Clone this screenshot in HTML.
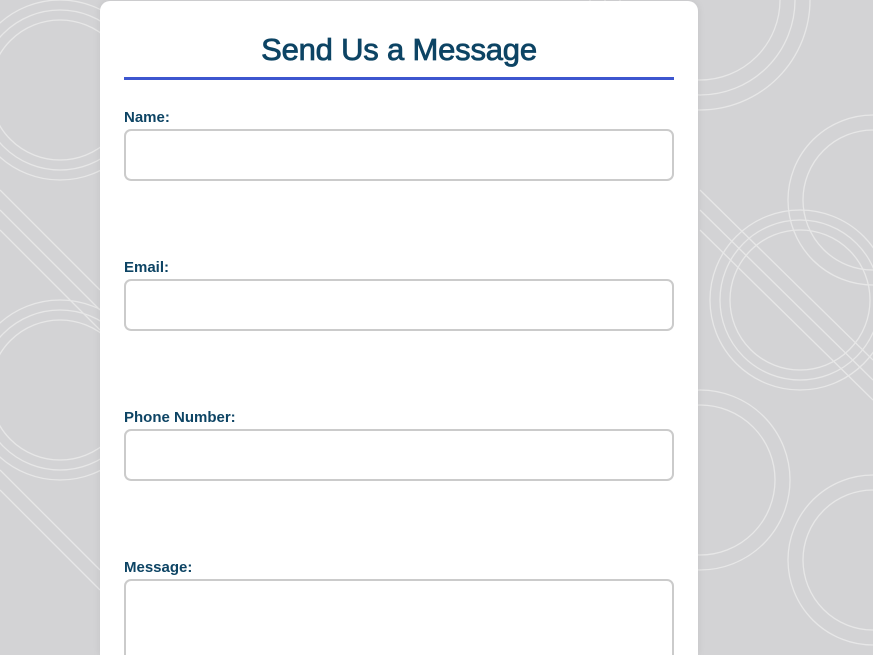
<!DOCTYPE html>
<html><head><style>
html,body{margin:0;height:655px;overflow:hidden}
body{background:#d3d3d5;font-family:"Liberation Sans",sans-serif;position:relative;width:873px}
.bg{position:absolute;left:0;top:0}
.card{position:absolute;left:100px;top:1px;width:598px;height:654px;overflow:hidden;background:#fff;border-radius:10px 10px 0 0;box-shadow:0 0 8px rgba(0,0,0,.08)}
h1{margin:0;position:absolute;left:24px;width:550px;top:31px;text-align:center;font-size:31px;font-weight:normal;color:#0d4464;-webkit-text-stroke:.8px #0d4464;letter-spacing:-.2px}
.line{position:absolute;left:24px;width:550px;top:76px;height:3px;background:#3d56cf}
label{position:absolute;left:24px;font-size:15px;font-weight:bold;color:#0d4464}
.in{position:absolute;left:24px;width:546px;height:48px;border:2px solid #cbcbcb;border-radius:7px;box-sizing:content-box}
</style></head><body>
<svg class="bg" width="873" height="655" fill="none" stroke="#ececec" stroke-width="1.3">
<g opacity=".8">
<circle cx="60" cy="90" r="70"/><circle cx="60" cy="90" r="80"/><circle cx="60" cy="90" r="90"/>
<circle cx="60" cy="390" r="70"/><circle cx="60" cy="390" r="80"/><circle cx="60" cy="390" r="90"/>
<circle cx="800" cy="300" r="70"/><circle cx="800" cy="300" r="80"/><circle cx="800" cy="300" r="90"/>
<circle cx="700" cy="0" r="80"/><circle cx="700" cy="0" r="95"/><circle cx="700" cy="0" r="110"/>
<circle cx="873" cy="200" r="70"/><circle cx="873" cy="200" r="85"/>
<circle cx="873" cy="560" r="70"/><circle cx="873" cy="560" r="85"/>
<circle cx="700" cy="480" r="75"/><circle cx="700" cy="480" r="90"/>
<path d="M0 190 L100 290 M0 210 L100 310 M0 230 L100 330 M700 190 L873 360 M700 210 L873 380 M700 230 L873 400 M0 470 L100 570 M0 490 L100 590"/>
</g></svg>
<div class="card">
<h1>Send Us a Message</h1>
<div class="line"></div>
<label style="top:108px">Name:</label><div class="in" style="top:128px"></div>
<label style="top:258px">Email:</label><div class="in" style="top:278px"></div>
<label style="top:408px">Phone Number:</label><div class="in" style="top:428px"></div>
<label style="top:558px">Message:</label><div class="in" style="top:578px;height:120px"></div>
</div>
</body></html>
